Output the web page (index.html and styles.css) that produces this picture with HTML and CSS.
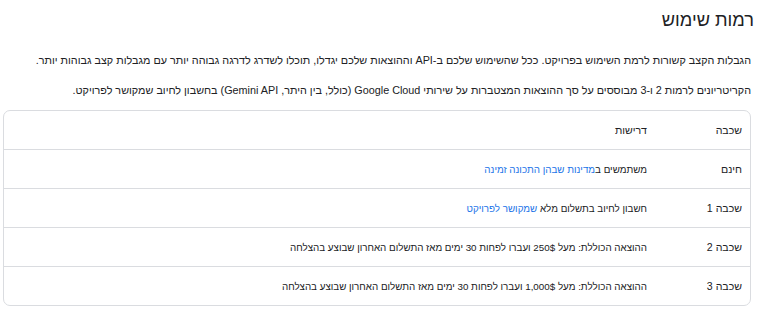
FILE: index.html
```html
<!DOCTYPE html>
<html lang="he" dir="rtl">

<head>
    <meta charset="UTF-8">
    <meta name="viewport" content="width=device-width, initial-scale=1.0">
    <title>רמות שימוש</title>
    <link rel="stylesheet" href="styles.css">
</head>

<body>

    <h2 class="page-title">רמות שימוש</h2>

    <p class="intro">הגבלות הקצב קשורות לרמת השימוש בפרויקט. ככל שהשימוש שלכם ב-API וההוצאות שלכם יגדלו, תוכלו לשדרג לדרגה גבוהה יותר עם מגבלות קצב גבוהות יותר.</p>

    <p class="intro">הקריטריונים לרמות 2 ו-3 מבוססים על סך ההוצאות המצטברות על שירותי Google Cloud (כולל, בין היתר, Gemini API) בחשבון לחיוב שמקושר לפרויקט.</p>

    <!-- טבלת השכבות -->
    <div class="tiers">
        <table>
            <thead>
                <tr>
                    <th class="tier">שכבה</th>
                    <th>דרישות</th>
                </tr>
            </thead>
            <tbody>
                <tr>
                    <td class="tier">חינם</td>
                    <td>משתמשים ב<a href="#">מדינות שבהן התכונה זמינה</a></td>
                </tr>
                <tr>
                    <td class="tier">שכבה 1</td>
                    <td>חשבון לחיוב בתשלום מלא <a href="#">שמקושר לפרויקט</a></td>
                </tr>
                <tr>
                    <td class="tier">שכבה 2</td>
                    <td>ההוצאה הכוללת: מעל 250$ ועברו לפחות 30 ימים מאז התשלום האחרון שבוצע בהצלחה</td>
                </tr>
                <tr>
                    <td class="tier">שכבה 3</td>
                    <td>ההוצאה הכוללת: מעל 1,000$ ועברו לפחות 30 ימים מאז התשלום האחרון שבוצע בהצלחה</td>
                </tr>
            </tbody>
        </table>
    </div>

</body>

</html>
```

FILE: styles.css
```css
body {
    margin: 0;
    padding: 0 9px 0 3px;
    font-family: "Liberation Sans", Arial, sans-serif;
    color: #202124;
    background: #ffffff;
}

.page-title {
    margin: 8px -3px 0 0;
    font-size: 18.2px;
    font-weight: 400;
    line-height: 24px;
}

.intro {
    margin: 20px 0 0 0;
    font-size: 10.8px;
    line-height: 16px;
}

.intro + .intro {
    margin-top: 14px;
}

.tiers {
    margin-top: 12px;
    border: 1px solid #dadce0;
    border-radius: 7px;
    overflow: hidden;
}

.tiers table {
    width: 100%;
    border-collapse: collapse;
    font-size: 9.8px;
}

.tiers th,
.tiers td {
    text-align: right;
    font-weight: 400;
    height: 38px;
    padding: 0 8px;
    border-top: 1px solid #dadce0;
    vertical-align: middle;
}

.tiers thead th {
    border-top: none;
    font-size: 10.6px;
}

.tiers .tier {
    width: 79px;
    font-size: 10.6px;
}

.tiers a {
    color: #1a73e8;
    text-decoration: none;
}
```
